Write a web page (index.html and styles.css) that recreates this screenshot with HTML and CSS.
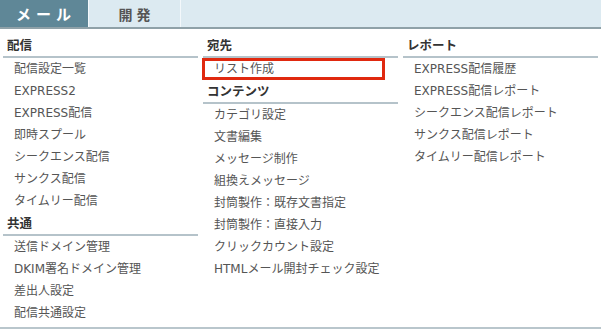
FILE: index.html
```html
<!DOCTYPE html>
<html lang="ja">
<head>
<meta charset="utf-8">
<link rel="stylesheet" href="styles.css">
</head>
<body>
<div class="tabs">
  <div class="tab active">メール</div>
  <div class="tab">開発</div>
</div>
<div class="menu">
  <div class="col">
    <div class="head">配信</div>
    <ul>
      <li>配信設定一覧</li>
      <li>EXPRESS2</li>
      <li>EXPRESS配信</li>
      <li>即時スプール</li>
      <li>シークエンス配信</li>
      <li>サンクス配信</li>
      <li>タイムリー配信</li>
    </ul>
    <div class="head">共通</div>
    <ul>
      <li>送信ドメイン管理</li>
      <li>DKIM署名ドメイン管理</li>
      <li>差出人設定</li>
      <li>配信共通設定</li>
    </ul>
  </div>
  <div class="col">
    <div class="head">宛先</div>
    <ul>
      <li class="selected">リスト作成</li>
    </ul>
    <div class="head">コンテンツ</div>
    <ul>
      <li>カテゴリ設定</li>
      <li>文書編集</li>
      <li>メッセージ制作</li>
      <li>組換えメッセージ</li>
      <li>封筒製作：既存文書指定</li>
      <li>封筒製作：直接入力</li>
      <li>クリックカウント設定</li>
      <li>HTMLメール開封チェック設定</li>
    </ul>
  </div>
  <div class="col">
    <div class="head">レポート</div>
    <ul>
      <li>EXPRESS配信履歴</li>
      <li>EXPRESS配信レポート</li>
      <li>シークエンス配信レポート</li>
      <li>サンクス配信レポート</li>
      <li>タイムリー配信レポート</li>
    </ul>
  </div>
</div>
</body>
</html>
```
FILE: styles.css
```css
* { box-sizing: border-box; }
html, body { margin: 0; padding: 0; background: #fff; }
body {
  font-family: "DejaVu Sans", "Noto Sans CJK JP", sans-serif;
  font-size: 12px;
  color: #555;
}
.tabs {
  display: flex;
  height: 29px;
  background: #dceaf1;
  border-bottom: 2px solid #8fa1a8;
}
.tab {
  width: 92px;
  height: 27px;
  display: flex;
  align-items: center;
  justify-content: center;
  font-family: "Noto Sans CJK JP", sans-serif;
  font-weight: bold;
  font-size: 14px;
  letter-spacing: 4px;
  padding-left: 4px;
  color: #555;
  border-right: 1px solid #f3f8fb;
}
.tab.active {
  width: 89px;
  background: #5f8797;
  color: #fff;
  font-size: 15px;
  letter-spacing: 5px;
}
.menu {
  display: grid;
  grid-template-columns: 195px 195px 195px;
  column-gap: 5px;
  padding: 5px 4px 3px 3px;
  border-bottom: 2px solid #b9c6cc;
}
.col { display: flex; flex-direction: column; }
.head {
  height: 24px;
  line-height: 22px;
  padding-left: 4px;
  font-family: "Noto Sans CJK JP", sans-serif;
  font-weight: bold;
  font-size: 12.5px;
  color: #333;
  border-bottom: 2px solid #b5c3ca;
}
ul { list-style: none; margin: 0; padding: 0; }
li {
  height: 22px;
  line-height: 22px;
  padding-left: 11px;
  white-space: nowrap;
}
li.selected {
  width: 183px;
  margin-left: -1px;
  border: 3px solid #e0290f;
  line-height: 16px;
  padding-left: 9px;
}
```
